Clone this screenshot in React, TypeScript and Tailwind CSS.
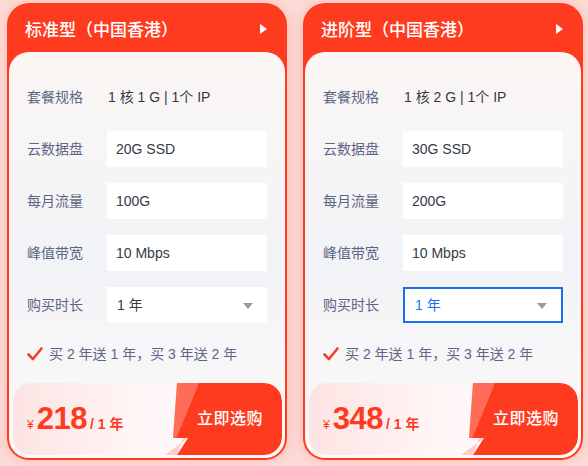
import React from "react";

type Plan = {
  title: string;
  spec: string;
  disk: string;
  traffic: string;
  bandwidth: string;
  price: string;
  focused?: boolean;
};

const plans: Plan[] = [
  { title: "标准型（中国香港）", spec: "1 核 1 G | 1个 IP", disk: "20G SSD", traffic: "100G", bandwidth: "10 Mbps", price: "218" },
  { title: "进阶型（中国香港）", spec: "1 核 2 G | 1个 IP", disk: "30G SSD", traffic: "200G", bandwidth: "10 Mbps", price: "348", focused: true },
];

function Row({ label, children }: { label: string; children: React.ReactNode }) {
  return (
    <div className="flex items-center h-9">
      <div className="w-[80px] shrink-0 text-[14px] text-[#5c6685]">{label}</div>
      {children}
    </div>
  );
}

function ValueBox({ text }: { text: string }) {
  return (
    <div className="w-[160px] h-9 flex items-center px-[9px] bg-white text-[14px] text-[#333a45]">
      {text}
    </div>
  );
}

function BuyButton() {
  return (
    <div className="relative w-[119px] h-[72px] shrink-0 flex items-center justify-end pr-[19px]">
      <svg className="absolute inset-0" width="119" height="72" viewBox="0 0 119 72">
        <path d="M14 0 H101 A18 18 0 0 1 119 18 V54 A18 18 0 0 1 101 72 H14 L25 55 H10 Z" fill="#ff3b1f" />
        <path d="M14 0 H36 L18 44 L13 55 H10 Z" fill="#ffffff" fillOpacity="0.25" />
        <path d="M2 72 L25 55 H20 L14 72 Z" fill="#ff6a55" fillOpacity="0.3" />
      </svg>
      <span className="relative text-[16px] font-medium text-white tracking-[0.5px]">立即选购</span>
    </div>
  );
}

function PlanCard({ plan }: { plan: Plan }) {
  return (
    <div className="w-[280px] h-[457px] rounded-[22px] bg-[#ff3b1f] flex flex-col shadow-[0_0_14px_rgba(255,110,90,0.3)]">
      <div className="h-[49px] shrink-0 flex items-center justify-between pl-[18px] pr-[20px]">
        <span className="text-[17px] font-medium text-white pt-[6px]">{plan.title}</span>
        <svg width="7" height="10" viewBox="0 0 7 10" className="mt-[3px]">
          <path d="M0 0 L7 5 L0 10 Z" fill="#ffffff" />
        </svg>
      </div>
      <div className="flex-1 mx-[2px] mb-[2px] rounded-[20px] bg-gradient-to-b from-[#fbf6f4] via-[#f2f3f7] to-[#fcf9f8] flex flex-col pt-[27px] pb-[3px]">
        <div className="flex flex-col gap-4 px-[18px]">
          <Row label="套餐规格">
            <span className="pl-[1px] text-[14px] text-[#333a45]">{plan.spec}</span>
          </Row>
          <Row label="云数据盘">
            <ValueBox text={plan.disk} />
          </Row>
          <Row label="每月流量">
            <ValueBox text={plan.traffic} />
          </Row>
          <Row label="峰值带宽">
            <ValueBox text={plan.bandwidth} />
          </Row>
          <Row label="购买时长">
            <div
              className={`w-[160px] h-9 flex items-center justify-between bg-white pl-[10px] pr-[14px] text-[14px] ${
                plan.focused ? "border-2 border-[#1a6ef0] text-[#1a6ef0]" : "text-[#333a45]"
              }`}
            >
              <span>1 年</span>
              <svg width="10" height="6" viewBox="0 0 10 6" className="mt-[2px]">
                <path d="M0 0 H10 L5 6 Z" fill="#9a9a9a" />
              </svg>
            </div>
          </Row>
        </div>
        <div className="mt-[21px] h-5 flex items-center gap-[6px] px-[18px]">
          <svg width="16" height="14" viewBox="0 0 16 14">
            <path d="M1.5 7.5 L6 12 L14.5 1.5" fill="none" stroke="#f0412b" strokeWidth="2.6" strokeLinecap="round" strokeLinejoin="round" />
          </svg>
          <span className="text-[14px] text-[#5c6685]">买 2 年送 1 年，买 3 年送 2 年</span>
        </div>
        <div className="mt-[19px] ml-[4px] mr-[3px] h-[72px] rounded-[18px] flex items-stretch overflow-hidden bg-gradient-to-r from-[#fde3e3] via-[#fff7f7] to-[#fffafa]">
          <div className="flex-1 flex items-baseline pl-[14px] pt-[20px] text-[#ff3b1f]">
            <span className="text-[12px] mr-[3px]">¥</span>
            <span className="text-[31px] font-bold leading-none tracking-[-0.5px]">{plan.price}</span>
            <span className="text-[14px] font-semibold ml-[3px]">/ 1 年</span>
          </div>
          <BuyButton />
        </div>
      </div>
    </div>
  );
}

export default function App() {
  return (
    <div
      className="w-[588px] h-[466px] bg-[#fcdcd8] flex gap-4 pl-[7px] pt-[3px]"
      style={{ fontFamily: '"Liberation Sans", "Noto Sans CJK SC", sans-serif' }}
    >
      {plans.map((p) => (
        <PlanCard key={p.title} plan={p} />
      ))}
    </div>
  );
}
